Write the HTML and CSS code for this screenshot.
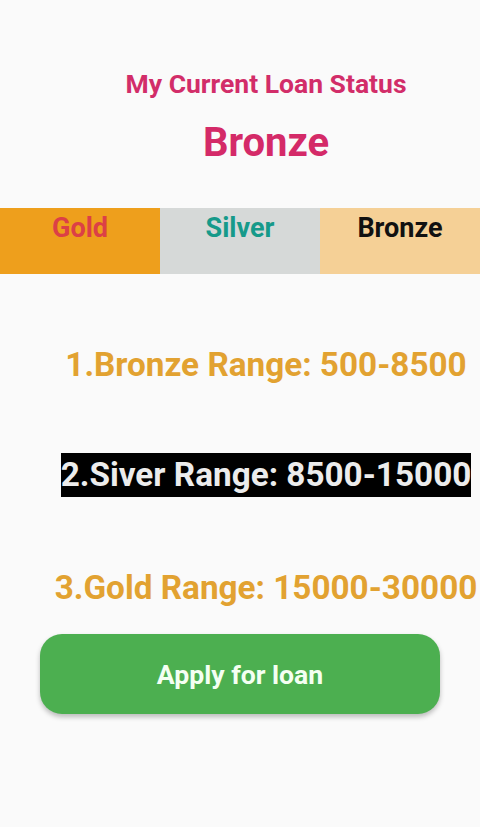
FILE: index.html
```html
<!DOCTYPE html>
<html>
<head>
<meta charset="utf-8">
<link rel="stylesheet" href="styles.css">
</head>
<body>
<div class="page">
  <header class="head">
    <div class="title">My Current Loan Status</div>
    <div class="level">Bronze</div>
  </header>
  <div class="tabs">
    <div class="tab tab-gold">Gold</div>
    <div class="tab tab-silver">Silver</div>
    <div class="tab tab-bronze">Bronze</div>
  </div>
  <div class="ranges">
    <div class="range range-1">1.Bronze Range: 500-8500</div>
    <div class="range range-2"><span class="hl">2.Siver Range: 8500-15000</span></div>
    <div class="range range-3">3.Gold Range: 15000-30000</div>
  </div>
  <div class="actions">
    <button class="apply">Apply for loan</button>
  </div>
</div>
</body>
</html>
```
FILE: styles.css
```css
html, body {
  margin: 0;
  padding: 0;
  background: #fafafa;
}
body {
  font-family: Roboto, "Noto Sans", sans-serif;
  width: 480px;
  height: 827px;
  overflow: hidden;
}
.page {
  display: flex;
  flex-direction: column;
}
.head {
  display: flex;
  flex-direction: column;
  align-items: center;
  padding: 68px 0 0 52px;
  height: 208px;
  box-sizing: border-box;
  flex-shrink: 0;
}
.title {
  font-size: 26.5px;
  font-weight: 700;
  color: #d22d69;
  line-height: 32px;
}
.level {
  margin-top: 19px;
  font-size: 40px;
  font-weight: 700;
  color: #d42a68;
  line-height: 48px;
}
.tabs {
  display: grid;
  grid-template-columns: 160px 160px 160px;
  height: 66px;
  flex-shrink: 0;
}
.tab {
  text-align: center;
  font-size: 27px;
  font-weight: 700;
  padding-top: 4px;
  line-height: 32px;
}
.tab-gold { background: #ee9f1c; color: #dc4046; }
.tab-silver { background: #d6d9d8; color: #169a8a; }
.tab-bronze { background: #f5d096; color: #111; }
.ranges {
  display: flex;
  flex-direction: column;
  align-items: center;
  padding: 69px 0 0 52px;
}
.range {
  font-size: 33.3px;
  font-weight: 700;
  line-height: 44px;
  color: #e2a231;
  white-space: nowrap;
}
.range-2 {
  margin-top: 66px;
}
.hl {
  display: inline-block;
  background: #000;
  color: #ececec;
  line-height: 44px;
}
.range-3 {
  margin-top: 69px;
}
.actions {
  display: flex;
  justify-content: center;
  padding-top: 24px;
}
.apply {
  width: 400px;
  height: 80px;
  border: none;
  border-radius: 22px;
  background: #4caf50;
  color: #f4fff2;
  font-family: Roboto, "Noto Sans", sans-serif;
  font-size: 26.6px;
  font-weight: 700;
  box-shadow: 0 3px 5px rgba(0,0,0,0.25);
}
```
